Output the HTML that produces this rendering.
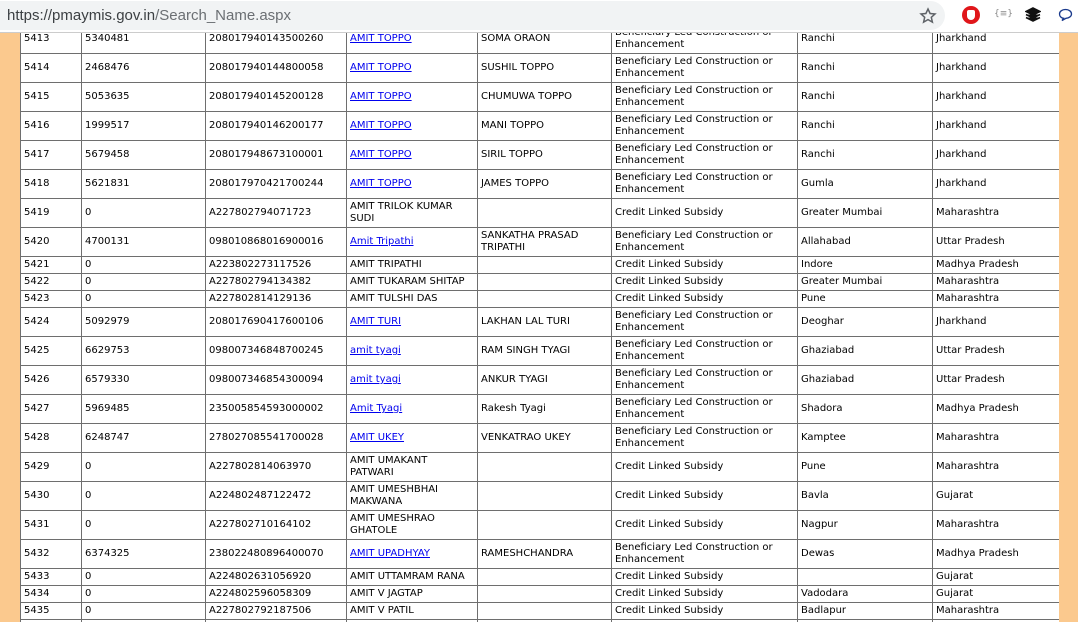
<!DOCTYPE html>
<html><head><meta charset="utf-8"><style>
*{margin:0;padding:0;box-sizing:border-box}
body{width:1078px;height:622px;overflow:hidden;background:#fbc98e;position:relative;font-family:"DejaVu Sans","Liberation Sans",sans-serif}
#bar{position:absolute;left:0;top:0;width:1078px;height:33px;background:#fff;border-bottom:1px solid #ccc;z-index:2}
#url{position:absolute;left:-20px;top:1px;width:965px;height:29px;background:#f1f3f4;border-radius:15px}
#url span{position:absolute;left:27px;top:6px;font-family:"Liberation Sans",sans-serif;font-size:15px;color:#3c4043}
#url span i{font-style:normal;color:#6b6f73}
#wrap{position:absolute;left:20px;top:33px;width:1039px;height:589px;overflow:hidden;background:#fff}
table{position:absolute;left:0;top:-9px;border-collapse:collapse;table-layout:fixed;width:1039px;font-size:10px;line-height:12px;color:#000}
td{border:1px solid #6e6e6e;padding:0 3px;vertical-align:middle;white-space:normal;overflow:hidden}
tr.t td{height:29px}
tr.s td{height:17px}
a{color:#00e;text-decoration:underline}
</style></head><body>
<div id="bar"><div id="url"><span>https://pmaymis.gov.in<i>/Search_Name.aspx</i></span></div>
<svg style="position:absolute;left:919px;top:7px" width="18" height="18" viewBox="0 0 18 18"><path d="M9 2l2.1 4.5 4.9.5-3.7 3.3 1.1 4.8L9 12.6 4.6 15.1l1.1-4.8L2 7l4.9-.5z" fill="none" stroke="#5f6368" stroke-width="1.5"/></svg>
<div style="position:absolute;left:962px;top:6px;width:18px;height:18px;border-radius:50%;background:#e0161a"><div style="position:absolute;left:5px;top:4px;width:8px;height:10px;background:#fff;border-radius:2px 2px 4px 4px"></div></div>
<div style="position:absolute;left:994px;top:9px;font-size:9px;color:#888">{≡}</div>
<svg style="position:absolute;left:1025px;top:7px" width="16" height="16" viewBox="0 0 16 16"><path d="M8 1L1 4.5 8 8l7-3.5z M1 7.5L8 11l7-3.5 M1 10.5L8 14l7-3.5" fill="#111" stroke="#111" stroke-width="1.6"/></svg>
<svg style="position:absolute;left:1058px;top:8px" width="15" height="14" viewBox="0 0 15 14"><path d="M7.5 1.5C4 1.5 1.5 3.5 1.5 6s2 4 4 4.3L4 12.5l4-2.2c3-.2 5.5-2 5.5-4.3 0-2.5-2.5-4.5-6-4.5z" fill="none" stroke="#1a3a8c" stroke-width="1.3"/></svg>
</div>
<div id="wrap"><table>
<colgroup><col style="width:61px"><col style="width:124px"><col style="width:141px"><col style="width:131px"><col style="width:134px"><col style="width:186px"><col style="width:135px"><col style="width:127px"></colgroup>
<tr class="t"><td>5413</td><td>5340481</td><td>208017940143500260</td><td><a>AMIT TOPPO</a></td><td>SOMA ORAON</td><td>Beneficiary Led Construction or Enhancement</td><td>Ranchi</td><td>Jharkhand</td></tr>
<tr class="t"><td>5414</td><td>2468476</td><td>208017940144800058</td><td><a>AMIT TOPPO</a></td><td>SUSHIL TOPPO</td><td>Beneficiary Led Construction or Enhancement</td><td>Ranchi</td><td>Jharkhand</td></tr>
<tr class="t"><td>5415</td><td>5053635</td><td>208017940145200128</td><td><a>AMIT TOPPO</a></td><td>CHUMUWA TOPPO</td><td>Beneficiary Led Construction or Enhancement</td><td>Ranchi</td><td>Jharkhand</td></tr>
<tr class="t"><td>5416</td><td>1999517</td><td>208017940146200177</td><td><a>AMIT TOPPO</a></td><td>MANI TOPPO</td><td>Beneficiary Led Construction or Enhancement</td><td>Ranchi</td><td>Jharkhand</td></tr>
<tr class="t"><td>5417</td><td>5679458</td><td>208017948673100001</td><td><a>AMIT TOPPO</a></td><td>SIRIL TOPPO</td><td>Beneficiary Led Construction or Enhancement</td><td>Ranchi</td><td>Jharkhand</td></tr>
<tr class="t"><td>5418</td><td>5621831</td><td>208017970421700244</td><td><a>AMIT TOPPO</a></td><td>JAMES TOPPO</td><td>Beneficiary Led Construction or Enhancement</td><td>Gumla</td><td>Jharkhand</td></tr>
<tr class="t"><td>5419</td><td>0</td><td>A227802794071723</td><td>AMIT TRILOK KUMAR SUDI</td><td></td><td>Credit Linked Subsidy</td><td>Greater Mumbai</td><td>Maharashtra</td></tr>
<tr class="t"><td>5420</td><td>4700131</td><td>098010868016900016</td><td><a>Amit Tripathi</a></td><td>SANKATHA PRASAD TRIPATHI</td><td>Beneficiary Led Construction or Enhancement</td><td>Allahabad</td><td>Uttar Pradesh</td></tr>
<tr class="s"><td>5421</td><td>0</td><td>A223802273117526</td><td>AMIT TRIPATHI</td><td></td><td>Credit Linked Subsidy</td><td>Indore</td><td>Madhya Pradesh</td></tr>
<tr class="s"><td>5422</td><td>0</td><td>A227802794134382</td><td>AMIT TUKARAM SHITAP</td><td></td><td>Credit Linked Subsidy</td><td>Greater Mumbai</td><td>Maharashtra</td></tr>
<tr class="s"><td>5423</td><td>0</td><td>A227802814129136</td><td>AMIT TULSHI DAS</td><td></td><td>Credit Linked Subsidy</td><td>Pune</td><td>Maharashtra</td></tr>
<tr class="t"><td>5424</td><td>5092979</td><td>208017690417600106</td><td><a>AMIT TURI</a></td><td>LAKHAN LAL TURI</td><td>Beneficiary Led Construction or Enhancement</td><td>Deoghar</td><td>Jharkhand</td></tr>
<tr class="t"><td>5425</td><td>6629753</td><td>098007346848700245</td><td><a>amit tyagi</a></td><td>RAM SINGH TYAGI</td><td>Beneficiary Led Construction or Enhancement</td><td>Ghaziabad</td><td>Uttar Pradesh</td></tr>
<tr class="t"><td>5426</td><td>6579330</td><td>098007346854300094</td><td><a>amit tyagi</a></td><td>ANKUR TYAGI</td><td>Beneficiary Led Construction or Enhancement</td><td>Ghaziabad</td><td>Uttar Pradesh</td></tr>
<tr class="t"><td>5427</td><td>5969485</td><td>235005854593000002</td><td><a>Amit Tyagi</a></td><td>Rakesh Tyagi</td><td>Beneficiary Led Construction or Enhancement</td><td>Shadora</td><td>Madhya Pradesh</td></tr>
<tr class="t"><td>5428</td><td>6248747</td><td>278027085541700028</td><td><a>AMIT UKEY</a></td><td>VENKATRAO UKEY</td><td>Beneficiary Led Construction or Enhancement</td><td>Kamptee</td><td>Maharashtra</td></tr>
<tr class="t"><td>5429</td><td>0</td><td>A227802814063970</td><td>AMIT UMAKANT PATWARI</td><td></td><td>Credit Linked Subsidy</td><td>Pune</td><td>Maharashtra</td></tr>
<tr class="t"><td>5430</td><td>0</td><td>A224802487122472</td><td>AMIT UMESHBHAI MAKWANA</td><td></td><td>Credit Linked Subsidy</td><td>Bavla</td><td>Gujarat</td></tr>
<tr class="t"><td>5431</td><td>0</td><td>A227802710164102</td><td>AMIT UMESHRAO GHATOLE</td><td></td><td>Credit Linked Subsidy</td><td>Nagpur</td><td>Maharashtra</td></tr>
<tr class="t"><td>5432</td><td>6374325</td><td>238022480896400070</td><td><a>AMIT UPADHYAY</a></td><td>RAMESHCHANDRA</td><td>Beneficiary Led Construction or Enhancement</td><td>Dewas</td><td>Madhya Pradesh</td></tr>
<tr class="s"><td>5433</td><td>0</td><td>A224802631056920</td><td>AMIT UTTAMRAM RANA</td><td></td><td>Credit Linked Subsidy</td><td></td><td>Gujarat</td></tr>
<tr class="s"><td>5434</td><td>0</td><td>A224802596058309</td><td>AMIT V JAGTAP</td><td></td><td>Credit Linked Subsidy</td><td>Vadodara</td><td>Gujarat</td></tr>
<tr class="s"><td>5435</td><td>0</td><td>A227802792187506</td><td>AMIT V PATIL</td><td></td><td>Credit Linked Subsidy</td><td>Badlapur</td><td>Maharashtra</td></tr>
<tr class="s"><td>5436</td><td>0</td><td></td><td></td><td></td><td></td><td></td><td></td></tr>
</table></div>
</body></html>
